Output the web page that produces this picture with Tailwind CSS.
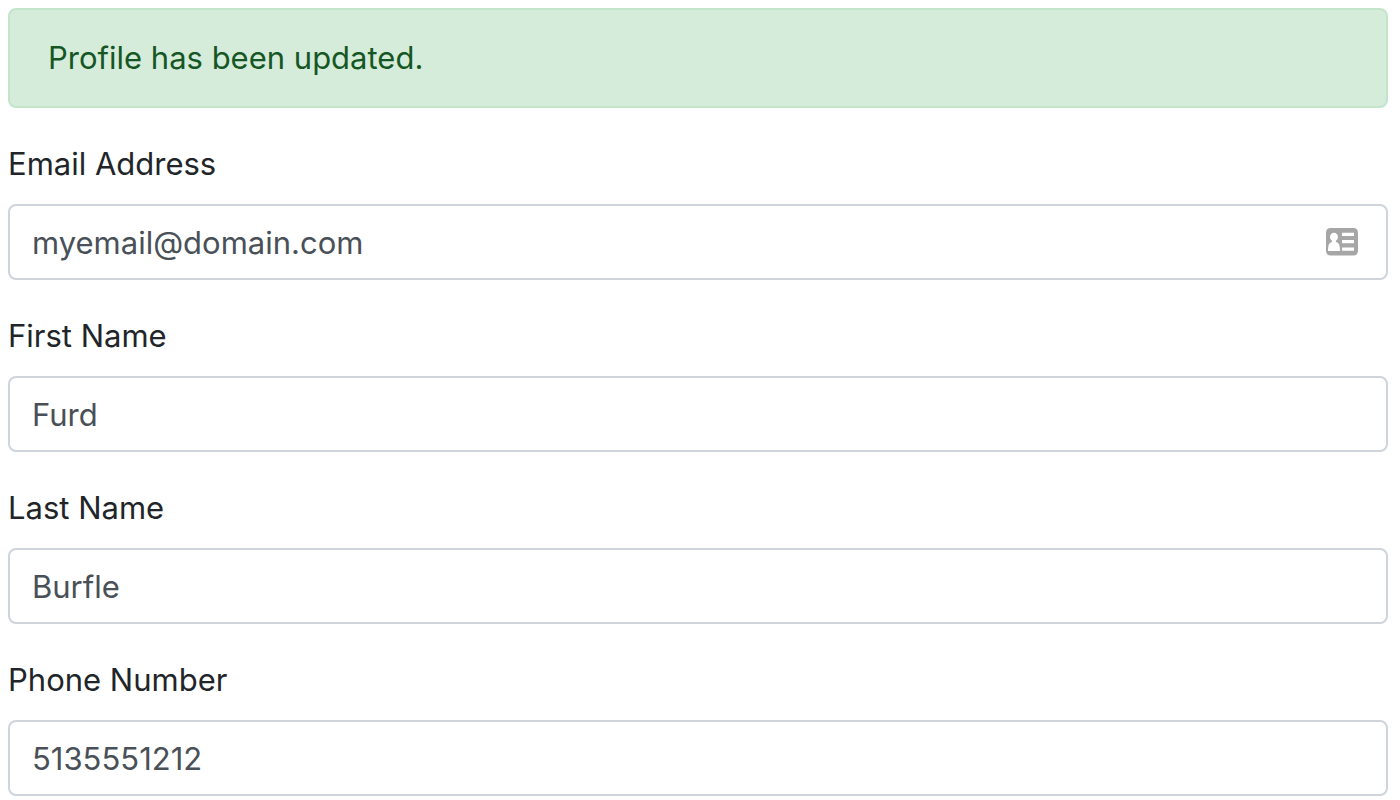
<!DOCTYPE html>
<html lang="en">
<head>
<meta charset="utf-8">
<title>Profile</title>
<script src="https://cdn.jsdelivr.net/npm/@tailwindcss/browser@4"></script>
</head>
<body class="bg-white font-['Inter','Liberation_Sans',sans-serif] text-[31px] leading-[48px] text-[#212529]">
<main class="py-2 pl-2 pr-3">
  <div role="alert" class="mb-8 rounded-lg border-2 border-[#c3e6cb] bg-[#d5ecdb] px-[38px] py-6 text-[#155724]">Profile has been updated.</div>
  <form class="flex flex-col gap-8">
    <div class="flex flex-col gap-4">
      <label for="email">Email Address</label>
      <div class="relative">
        <input id="email" type="email" value="myemail@domain.com" class="block h-[76px] w-full rounded-lg border-2 border-[#ced4da] bg-white pl-[22px] pr-20 text-[#495057]">
        <svg class="absolute right-[30px] top-6 h-7 w-8" viewBox="0 0 32 28" aria-hidden="true">
          <rect width="32" height="27.5" rx="4.5" fill="#a6a6a6"/>
          <g fill="#fff"><ellipse cx="8" cy="9" rx="4" ry="4.3"/><path d="M6 11h4v3c3 .8 4 3 4 9H2c0-6 1-8.200 4-9z"/><path d="M16 4.700h12v3.300H16zM16 12h12v3.300H16zM16 19.500h12v3.300H16z"/></g>
        </svg>
      </div>
    </div>
    <div class="flex flex-col gap-4">
      <label for="first">First Name</label>
      <input id="first" type="text" value="Furd" class="block h-[76px] w-full rounded-lg border-2 border-[#ced4da] bg-white px-[22px] text-[#495057]">
    </div>
    <div class="flex flex-col gap-4">
      <label for="last">Last Name</label>
      <input id="last" type="text" value="Burfle" class="block h-[76px] w-full rounded-lg border-2 border-[#ced4da] bg-white px-[22px] text-[#495057]">
    </div>
    <div class="flex flex-col gap-4">
      <label for="phone">Phone Number</label>
      <input id="phone" type="tel" value="5135551212" class="block h-[76px] w-full rounded-lg border-2 border-[#ced4da] bg-white px-[22px] text-[#495057]">
    </div>
  </form>
</main>
</body>
</html>
